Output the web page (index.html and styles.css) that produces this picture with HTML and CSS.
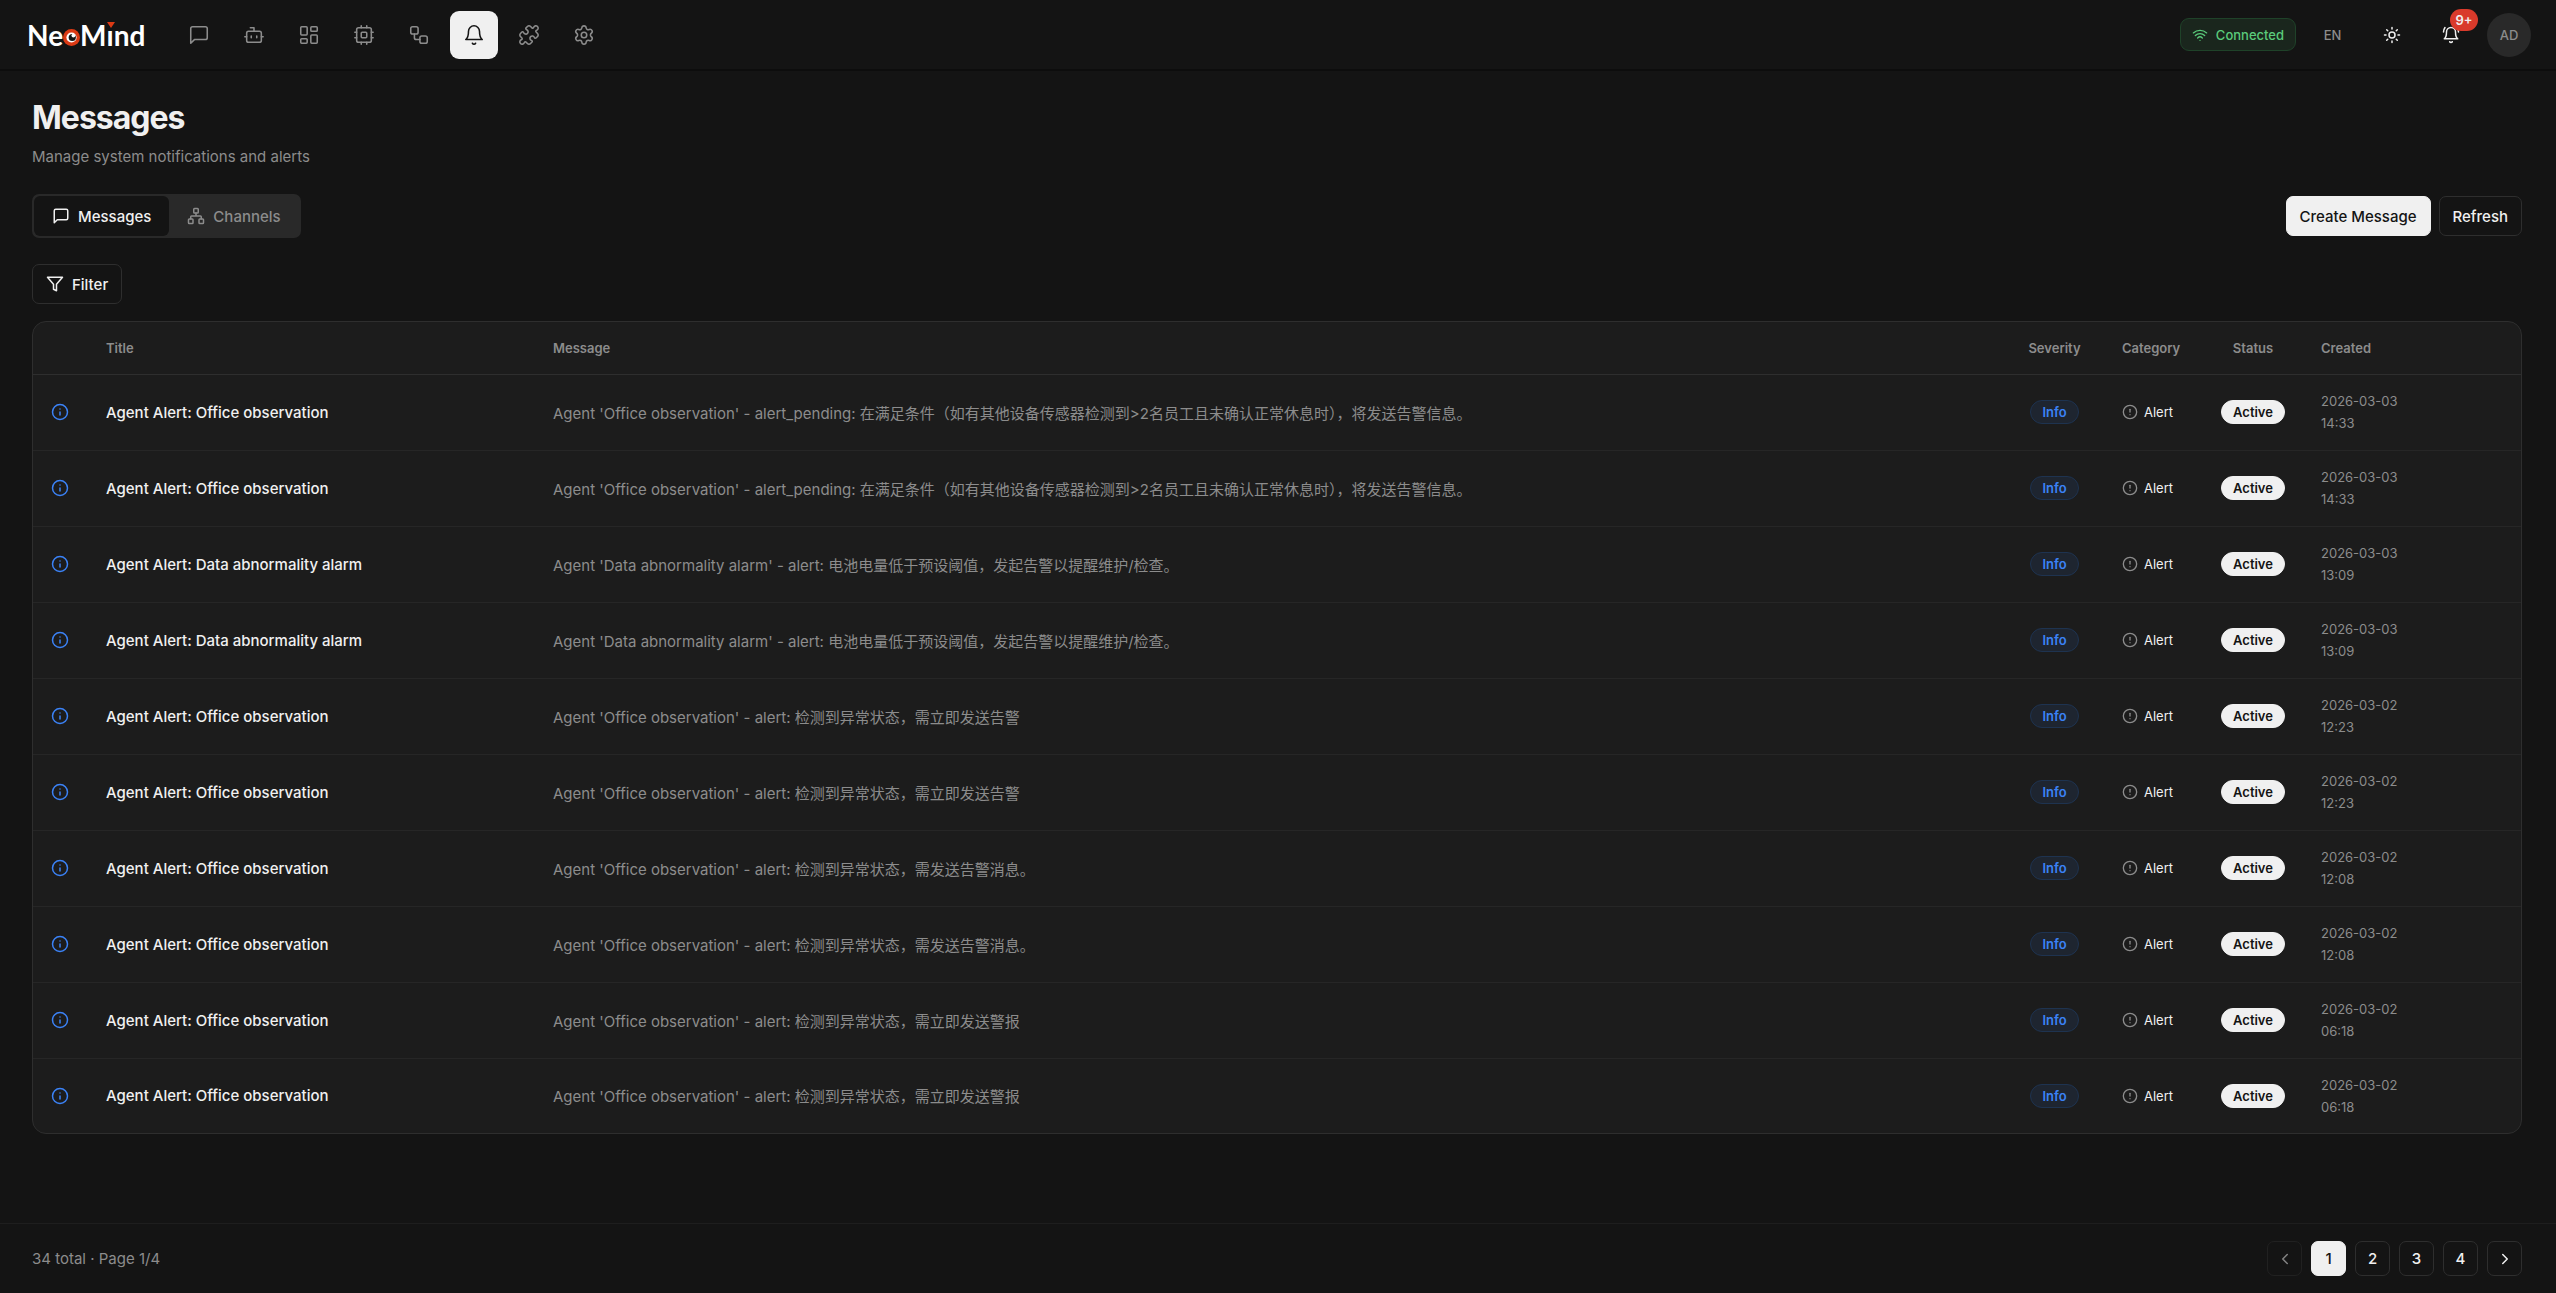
FILE: index.html
```html
<!DOCTYPE html>
<html lang="en">

<head>
    <meta charset="UTF-8">
    <meta name="viewport" content="width=device-width, initial-scale=1.0">
    <title>NeoMind - Messages</title>

    <link rel="stylesheet" href="styles.css">
</head>

<body>
    <!-- shared icons -->
    <svg class="sprite" aria-hidden="true">
        <symbol id="i-chat" viewBox="0 0 24 24">
            <path d="M21 15a2 2 0 0 1-2 2H7l-4 4V5a2 2 0 0 1 2-2h14a2 2 0 0 1 2 2z" />
        </symbol>
        <symbol id="i-info" viewBox="0 0 24 24">
            <circle cx="12" cy="12" r="10" />
            <path d="M12 16v-4" />
            <path d="M12 8h.01" />
        </symbol>
        <symbol id="i-alert" viewBox="0 0 24 24">
            <circle cx="12" cy="12" r="10" />
            <path d="M12 8v4" />
            <path d="M12 16h.01" />
        </symbol>
    </svg>

    <header class="topbar">
        <a href="#" class="logo" aria-label="NeoMind">
            <span>Ne</span>
            <svg class="logo-eye" viewBox="0 0 18 18">
                <circle cx="9" cy="9" r="9" fill="#dc3a14" />
                <circle cx="9" cy="9" r="5.4" fill="#fff" />
                <circle cx="9.8" cy="9" r="3.8" fill="#141414" />
                <circle cx="11" cy="7" r="2" fill="#fff" />
            </svg>
            <span>M</span>
            <span class="logo-i">&#305;<svg viewBox="0 0 8 6"><path d="M0 0h8L4 6z" fill="#dc3a14" /></svg></span>
            <span>nd</span>
        </a>

        <nav class="nav">
            <a href="#" aria-label="Chat"><svg class="icon"><use href="#i-chat" /></svg></a>
            <a href="#" aria-label="Agents">
                <svg class="icon" viewBox="0 0 24 24">
                    <path d="M12 8V4H8" />
                    <rect width="16" height="12" x="4" y="8" rx="2" />
                    <path d="M2 14h2M20 14h2M15 13v2M9 13v2" />
                </svg>
            </a>
            <a href="#" aria-label="Dashboard">
                <svg class="icon" viewBox="0 0 24 24">
                    <rect width="7" height="9" x="3" y="3" rx="1" />
                    <rect width="7" height="5" x="14" y="3" rx="1" />
                    <rect width="7" height="9" x="14" y="12" rx="1" />
                    <rect width="7" height="5" x="3" y="16" rx="1" />
                </svg>
            </a>
            <a href="#" aria-label="Devices">
                <svg class="icon" viewBox="0 0 24 24">
                    <rect width="16" height="16" x="4" y="4" rx="2" />
                    <rect width="6" height="6" x="9" y="9" rx="1" />
                    <path d="M15 2v2M15 20v2M2 15h2M2 9h2M20 15h2M20 9h2M9 2v2M9 20v2" />
                </svg>
            </a>
            <a href="#" aria-label="Automation">
                <svg class="icon" viewBox="0 0 24 24">
                    <rect width="8" height="8" x="3" y="3" rx="2" />
                    <path d="M7 11v4a2 2 0 0 0 2 2h4" />
                    <rect width="8" height="8" x="13" y="13" rx="2" />
                </svg>
            </a>
            <a href="#" class="active" aria-label="Messages">
                <svg class="icon" viewBox="0 0 24 24">
                    <path d="M10.268 21a2 2 0 0 0 3.464 0" />
                    <path d="M6 8a6 6 0 0 1 12 0c0 7 3 9 3 9H3s3-2 3-9" />
                </svg>
            </a>
            <a href="#" aria-label="Plugins">
                <svg class="icon" viewBox="0 0 24 24">
                    <path d="M19.439 7.85c-.049.322.059.648.289.878l1.568 1.568c.47.47.706 1.087.706 1.704s-.235 1.233-.706 1.704l-1.611 1.611a.98.98 0 0 1-.837.276c-.47-.07-.802-.48-.968-.925a2.501 2.501 0 1 0-3.214 3.214c.446.166.855.497.925.968a.979.979 0 0 1-.276.837l-1.61 1.61a2.404 2.404 0 0 1-1.705.707 2.402 2.402 0 0 1-1.704-.706l-1.568-1.568a1.026 1.026 0 0 0-.877-.29c-.493.074-.84.504-1.02.968a2.5 2.5 0 1 1-3.237-3.237c.464-.18.894-.527.967-1.02a1.026 1.026 0 0 0-.289-.877l-1.568-1.568A2.402 2.402 0 0 1 1.998 12c0-.617.236-1.234.706-1.704L4.23 8.77c.24-.24.581-.353.917-.303.515.077.877.528 1.073 1.01a2.5 2.5 0 1 0 3.259-3.259c-.482-.196-.933-.558-1.01-1.073-.05-.336.062-.676.303-.917l1.525-1.525A2.402 2.402 0 0 1 12 1.998c.617 0 1.234.236 1.704.706l1.568 1.568c.23.23.556.338.877.29.493-.074.84-.504 1.02-.968a2.5 2.5 0 1 1 3.237 3.237c-.464.18-.894.527-.967 1.02Z" />
                </svg>
            </a>
            <a href="#" aria-label="Settings">
                <svg class="icon" viewBox="0 0 24 24">
                    <path d="M9.671 4.136a2.34 2.34 0 0 1 4.659 0 2.34 2.34 0 0 0 3.319 1.915 2.34 2.34 0 0 1 2.33 4.033 2.34 2.34 0 0 0 0 3.831 2.34 2.34 0 0 1-2.33 4.033 2.34 2.34 0 0 0-3.319 1.915 2.34 2.34 0 0 1-4.659 0 2.34 2.34 0 0 0-3.32-1.915 2.34 2.34 0 0 1-2.33-4.033 2.34 2.34 0 0 0 0-3.831A2.34 2.34 0 0 1 6.35 6.051a2.34 2.34 0 0 0 3.319-1.915" />
                    <circle cx="12" cy="12" r="3" />
                </svg>
            </a>
        </nav>

        <div class="tools">
            <span class="connected">
                <svg class="icon" viewBox="0 0 24 24">
                    <path d="M12 20h.01M2 8.82a15 15 0 0 1 20 0M5 12.859a10 10 0 0 1 14 0M8.5 16.429a5 5 0 0 1 7 0" />
                </svg>
                Connected
            </span>
            <button type="button" class="tool lang">EN</button>
            <button type="button" class="tool" aria-label="Theme">
                <svg class="icon" viewBox="0 0 24 24">
                    <circle cx="12" cy="12" r="4" />
                    <path d="M12 2v2M12 20v2M4.93 4.93l1.41 1.41M17.66 17.66l1.41 1.41M2 12h2M20 12h2M6.34 17.66l-1.41 1.41M19.07 4.93l-1.41 1.41" />
                </svg>
            </button>
            <button type="button" class="tool" aria-label="Notifications">
                <svg class="icon" viewBox="0 0 24 24">
                    <path d="M10.268 21a2 2 0 0 0 3.464 0" />
                    <path d="M22 8c0-2.3-.8-4.3-2-6" />
                    <path d="M6 8a6 6 0 0 1 12 0c0 7 3 9 3 9H3s3-2 3-9" />
                    <path d="M4 2C2.8 3.7 2 5.7 2 8" />
                </svg>
                <span class="count">9+</span>
            </button>
            <button type="button" class="avatar">AD</button>
        </div>
    </header>

    <main class="main">
        <h1>Messages</h1>
        <p class="desc">Manage system notifications and alerts</p>

        <div class="bar">
            <div class="tabs">
                <button type="button" class="active"><svg class="icon"><use href="#i-chat" /></svg>Messages</button>
                <button type="button">
                    <svg class="icon" viewBox="0 0 24 24">
                        <rect x="16" y="16" width="6" height="6" rx="1" />
                        <rect x="2" y="16" width="6" height="6" rx="1" />
                        <rect x="9" y="2" width="6" height="6" rx="1" />
                        <path d="M5 16v-3a1 1 0 0 1 1-1h12a1 1 0 0 1 1 1v3M12 12V8" />
                    </svg>Channels</button>
            </div>
            <div class="actions">
                <button type="button" class="btn primary">Create Message</button>
                <button type="button" class="btn">Refresh</button>
            </div>
        </div>

        <button type="button" class="btn filter">
            <svg class="icon" viewBox="0 0 24 24">
                <path d="M22 3H2l8 9.46V19l4 2v-8.54z" />
            </svg>Filter</button>

        <div class="card">
            <table>
                <thead>
                    <tr>
                        <th class="c-icon"></th>
                        <th class="c-title">Title</th>
                        <th>Message</th>
                        <th class="c-severity">Severity</th>
                        <th class="c-category">Category</th>
                        <th class="c-status">Status</th>
                        <th class="c-created">Created</th>
                    </tr>
                </thead>
                <tbody id="rows"></tbody>
            </table>
        </div>
    </main>

    <footer class="footer">
        <span>34 total · Page 1/4</span>
        <div class="pager">
            <button type="button" disabled aria-label="Previous"><svg class="icon" viewBox="0 0 24 24"><path d="m15 18-6-6 6-6" /></svg></button>
            <button type="button" class="active">1</button>
            <button type="button">2</button>
            <button type="button">3</button>
            <button type="button">4</button>
            <button type="button" aria-label="Next"><svg class="icon" viewBox="0 0 24 24"><path d="m9 18 6-6-6-6" /></svg></button>
        </div>
    </footer>

    <script src="script.js"></script>
</body>

</html>
```

FILE: styles.css
```css
* {
    margin: 0;
    padding: 0;
    box-sizing: border-box
}

body {
    min-height: 100vh;
    display: flex;
    flex-direction: column;
    background: #141414;
    color: #f0f0f0;
    font-family: Inter, "Noto Sans CJK SC", sans-serif;
    font-size: 15px;
}

a {
    color: inherit;
    text-decoration: none;
}

button {
    font: inherit;
    color: inherit;
    background: none;
    border: 0;
    cursor: pointer;
}

.sprite {
    display: none
}

.icon {
    width: 18px;
    height: 18px;
    flex: none;
    fill: none;
    stroke: currentColor;
    stroke-width: 2;
    stroke-linecap: round;
    stroke-linejoin: round;
}

/* top bar */

.topbar {
    height: 71px;
    display: flex;
    align-items: center;
    padding: 0 25px 0 27px;
    border-bottom: 2px solid #0d0d0d;
}

.logo {
    display: flex;
    align-items: baseline;
    margin-right: 30px;
    color: #fff;
    font-family: Lato, sans-serif;
    font-size: 28px;
    font-weight: 700;
    line-height: 40px;
}

.logo-eye {
    width: 17px;
    height: 17px;
}

.logo-i {
    position: relative;
}

.logo-i svg {
    position: absolute;
    top: 7px;
    left: 0;
    width: 8px;
    height: 6px;
}

.nav {
    display: flex;
    gap: 7px;
    color: #8c8c8c;
}

.nav a {
    display: flex;
    align-items: center;
    justify-content: center;
    width: 48px;
    height: 48px;
    border-radius: 9px;
}

.nav a.active {
    background: #f0f0f0;
    color: #141414;
}

.nav .icon {
    width: 22px;
    height: 22px;
    stroke-width: 1.7;
}

.tools {
    display: flex;
    align-items: center;
    gap: 14px;
    margin-left: auto;
}

.connected {
    display: flex;
    align-items: center;
    gap: 8px;
    height: 33px;
    padding: 0 11px;
    border: 1px solid #1f4229;
    border-radius: 9px;
    background: #1a261d;
    color: #5acb7b;
    font-size: 13px;
    font-weight: 500;
}

.connected .icon {
    width: 16px;
    height: 16px;
}

.tool {
    position: relative;
    display: flex;
    align-items: center;
    justify-content: center;
    width: 45px;
    height: 45px;
}

.lang {
    color: #8c8c8c;
    font-size: 13px;
    font-weight: 500;
}

.count {
    position: absolute;
    top: -3px;
    right: -5px;
    min-width: 28px;
    height: 22px;
    border-radius: 11px;
    background: #d93a2b;
    font-size: 13px;
    font-weight: 600;
    line-height: 22px;
    text-align: center;
}

.avatar {
    width: 44px;
    height: 44px;
    border-radius: 50%;
    background: #292929;
    color: #8c8c8c;
    font-size: 13px;
    font-weight: 500;
}

/* page */

.main {
    flex: 1;
    padding: 27px 34px 27px 32px;
}

h1 {
    font-size: 32px;
    font-weight: 700;
    line-height: 40px;
    letter-spacing: -1px;
}

.desc {
    margin-top: 7px;
    color: #8c8c8c;
    line-height: 24px;
}

.bar {
    display: flex;
    align-items: center;
    justify-content: space-between;
    margin-top: 25px;
}

.tabs {
    display: flex;
    padding: 2px;
    border-radius: 7px;
    background: #292929;
}

.tabs button {
    display: flex;
    align-items: center;
    gap: 8px;
    height: 40px;
    padding: 0 18px;
    border-radius: 6px;
    color: #8c8c8c;
    font-weight: 500;
}

.tabs button.active {
    background: #141414;
    color: #f0f0f0;
}

.actions {
    display: flex;
    gap: 8px;
}

.btn {
    display: flex;
    align-items: center;
    height: 40px;
    padding: 0 13px;
    border: 1px solid #2e2e2e;
    border-radius: 7px;
    font-weight: 500;
}

.btn.primary {
    border-color: #f0f0f0;
    background: #f0f0f0;
    color: #141414;
}

.filter {
    gap: 8px;
    margin-top: 26px;
}

/* table */

.card {
    margin-top: 17px;
    border: 1px solid #2e2e2e;
    border-radius: 14px;
    background: #1c1c1c;
    overflow: hidden;
}

table {
    width: 100%;
    border-collapse: collapse;
    table-layout: fixed;
}

th {
    height: 52px;
    padding: 0 18px;
    border-bottom: 1px solid #2e2e2e;
    color: #8c8c8c;
    font-size: 13px;
    font-weight: 600;
    text-align: left;
    white-space: nowrap;
}

td {
    height: 76px;
    padding: 0 18px;
    border-bottom: 1px solid #262626;
    vertical-align: middle;
}

tr:last-child td {
    height: 75px;
    border-bottom: 0;
}

td .icon {
    display: block;
}

.c-icon {
    width: 55px
}

.c-title {
    width: 447px
}

.c-severity {
    width: 99px
}

.c-category {
    width: 99px
}

.c-status {
    width: 100px
}

.c-created {
    width: 218px
}

.c-severity,
.c-status {
    padding: 0;
    text-align: center;
}

.info {
    color: #3b82f6
}

.title {
    font-weight: 500
}

.message {
    color: #8c8c8c;
    white-space: nowrap;
    overflow: hidden;
    text-overflow: ellipsis;
}

.badge {
    display: inline-block;
    height: 24px;
    padding: 0 11px;
    border: 1px solid #f0f0f0;
    border-radius: 12px;
    background: #f0f0f0;
    color: #141414;
    font-size: 13px;
    font-weight: 600;
    line-height: 22px;
}

.badge.blue {
    border-color: #1e3350;
    background: #1e2530;
    color: #3b82f6;
}

.category {
    display: flex;
    align-items: center;
    gap: 6px;
    font-size: 13px;
}

.category .icon {
    width: 16px;
    height: 16px;
    color: #8c8c8c;
}

.created {
    color: #8c8c8c;
    font-size: 13px;
    line-height: 22px;
}

.created span {
    display: block
}

/* footer */

.footer {
    display: flex;
    align-items: center;
    justify-content: space-between;
    height: 70px;
    padding: 0 34px 0 32px;
    border-top: 1px solid #1e1e1e;
    color: #8c8c8c;
}

.pager {
    display: flex;
    gap: 9px;
    color: #f0f0f0;
}

.pager button {
    display: flex;
    align-items: center;
    justify-content: center;
    width: 35px;
    height: 35px;
    border: 1px solid #2e2e2e;
    border-radius: 7px;
    font-weight: 500;
}

.pager button.active {
    border-color: #f0f0f0;
    background: #f0f0f0;
    color: #141414;
}

.pager button:disabled {
    opacity: .5
}
```

FILE: script.js
```js
var office = "Agent Alert: Office observation"
var data = "Agent Alert: Data abnormality alarm"

var pending = "Agent 'Office observation' - alert_pending: 在满足条件（如有其他设备传感器检测到>2名员工且未确认正常休息时），将发送告警信息。"
var battery = "Agent 'Data abnormality alarm' - alert: 电池电量低于预设阈值，发起告警以提醒维护/检查。"
var prefix = "Agent 'Office observation' - alert: "

var list = [
    [office, pending, "2026-03-03", "14:33"],
    [office, pending, "2026-03-03", "14:33"],
    [data, battery, "2026-03-03", "13:09"],
    [data, battery, "2026-03-03", "13:09"],
    [office, prefix + "检测到异常状态，需立即发送告警", "2026-03-02", "12:23"],
    [office, prefix + "检测到异常状态，需立即发送告警", "2026-03-02", "12:23"],
    [office, prefix + "检测到异常状态，需发送告警消息。", "2026-03-02", "12:08"],
    [office, prefix + "检测到异常状态，需发送告警消息。", "2026-03-02", "12:08"],
    [office, prefix + "检测到异常状态，需立即发送警报", "2026-03-02", "06:18"],
    [office, prefix + "检测到异常状态，需立即发送警报", "2026-03-02", "06:18"]
]

var html = ""
list.forEach(function (el) {
    html += '<tr>' +
        '<td class="info"><svg class="icon"><use href="#i-info" /></svg></td>' +
        '<td class="title">' + el[0] + '</td>' +
        '<td class="message">' + el[1].replace(">", "&gt;") + '</td>' +
        '<td class="c-severity"><span class="badge blue">Info</span></td>' +
        '<td><span class="category"><svg class="icon"><use href="#i-alert" /></svg>Alert</span></td>' +
        '<td class="c-status"><span class="badge">Active</span></td>' +
        '<td class="created"><span>' + el[2] + '</span><span>' + el[3] + '</span></td>' +
        '</tr>'
})
document.querySelector("#rows").innerHTML = html
```
